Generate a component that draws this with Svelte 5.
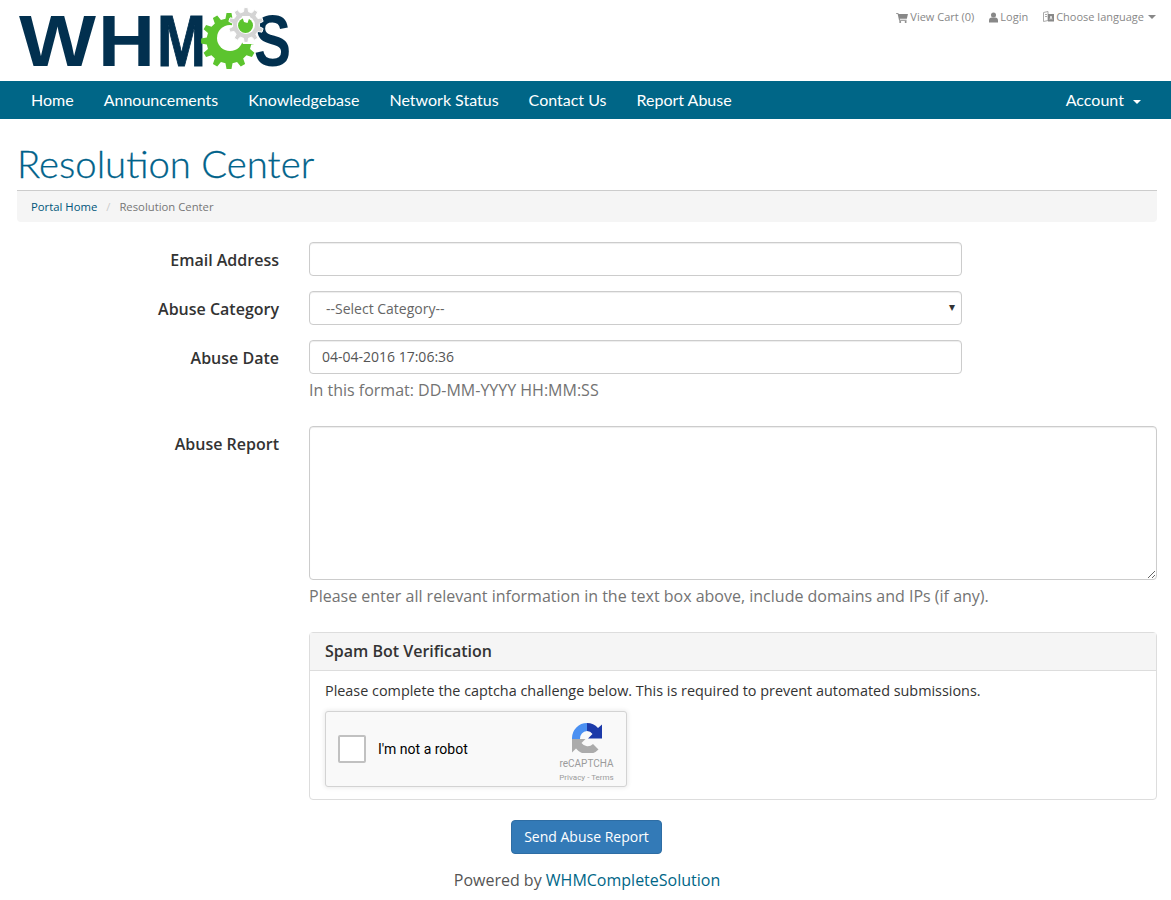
<script>
  const navLinks = ["Home", "Announcements", "Knowledgebase", "Network Status", "Contact Us", "Report Abuse"];

  // builds a closed cog outline, teeth sit between r1 and r2
  const gear = (cx, cy, r1, r2, teeth) => {
    const step = (Math.PI * 2) / teeth;
    let d = "";
    for (let i = 0; i < teeth; i++) {
      const a = i * step - Math.PI / 2;
      const pts = [
        [r1, a - step * 0.3],
        [r2, a - step * 0.17],
        [r2, a + step * 0.17],
        [r1, a + step * 0.3]
      ];
      for (const [r, t] of pts) {
        d += (d ? "L" : "M") + (cx + r * Math.cos(t)).toFixed(2) + " " + (cy + r * Math.sin(t)).toFixed(2);
      }
    }
    return d + "Z";
  };
</script>

<header class="top">
  <svg class="logo" width="320" height="81" viewBox="0 0 320 81">
    <text x="19" y="66" class="logo-text" textLength="77" lengthAdjust="spacingAndGlyphs">W</text>
    <text x="98" y="66" class="logo-text" textLength="57" lengthAdjust="spacingAndGlyphs">H</text>
    <text x="157" y="66" class="logo-text thick" textLength="49" lengthAdjust="spacingAndGlyphs">M</text>
    <path d={gear(229, 41, 22.500, 28, 12)} fill="#5cc42e" />
    <circle cx="230" cy="38" r="13" fill="#fff" />
    <path d="M233 26 L264 10 L264 44 L243 44 Z" fill="#fff" />
    <text x="254" y="66" class="logo-text" textLength="37" lengthAdjust="spacingAndGlyphs">S</text>
    <path d={gear(246, 25, 13.500, 17.500, 10)} fill="#d4d4d4" stroke="#fff" stroke-width="1" />
    <circle cx="246" cy="25" r="9" fill="#fff" />
    <circle cx="245.500" cy="25.500" r="7.500" fill="#5cc42e" />
    <path d="M242 16 L250 16 L247.500 23 L244 22 Z" fill="#fff" />
  </svg>
  <div class="top-links">
    <span class="top-link">
      <svg width="12" height="11" viewBox="0 0 13 12"><path d="M0 1h2.4l.4 1.3H13l-1.2 5H4l.3 1.2h7.2v1H3.4L1.700 2H0Z" fill="#888" /><circle cx="4.500" cy="10.800" r="1.100" fill="#888" /><circle cx="10.500" cy="10.800" r="1.100" fill="#888" /></svg>
      <span>View Cart (0)</span>
    </span>
    <span class="top-link">
      <svg width="9" height="11" viewBox="0 0 10 12"><circle cx="5" cy="3.200" r="2.800" fill="#888" /><path d="M0 11.500V9c0-2 1.500-3 3-3h4c1.500 0 3 1 3 3v2.500Z" fill="#888" /></svg>
      <span>Login</span>
    </span>
    <span class="top-link">
      <svg width="11" height="12" viewBox="0 0 11 12"><path d="M.5 1.500 5 .5v9l-4.500 1Z" fill="none" stroke="#aaa" /><path d="M2 3.500h2M2 5.500h2" stroke="#aaa" /><rect x="5" y="3" width="6" height="7.500" fill="#888" /><path d="M7 8.500 8 5l1 3.500" fill="none" stroke="#fff" stroke-width=".8" /></svg>
      <span>Choose language</span> <i class="caret"></i>
    </span>
  </div>
</header>

<nav class="navbar">
  <ul>
    {#each navLinks as link}
      <li>{link}</li>
    {/each}
  </ul>
  <div class="account">Account <i class="caret white"></i></div>
</nav>

<main>
  <h1>Resolution Center</h1>
  <div class="crumbs">
    <a href="#home">Portal Home</a><span class="sep">/</span><span class="here">Resolution Center</span>
  </div>

  <form>
    <div class="row">
      <label for="email">Email Address</label>
      <div class="field short"><input id="email" type="text" /></div>
    </div>
    <div class="row">
      <label for="cat">Abuse Category</label>
      <div class="field short">
        <div class="select" id="cat">--Select Category--<span class="arrow">▾</span></div>
      </div>
    </div>
    <div class="row date">
      <label for="date">Abuse Date</label>
      <div class="field short">
        <input id="date" type="text" value="04-04-2016 17:06:36" />
        <p class="help">In this format: DD-MM-YYYY HH:MM:SS</p>
      </div>
    </div>
    <div class="row report">
      <label for="report">Abuse Report</label>
      <div class="field">
        <textarea id="report"></textarea>
        <p class="help">Please enter all relevant information in the text box above, include domains and IPs (if any).</p>
      </div>
    </div>

    <div class="panel">
      <div class="panel-head">Spam Bot Verification</div>
      <div class="panel-body">
        <p>Please complete the captcha challenge below. This is required to prevent automated submissions.</p>
        <div class="captcha">
          <span class="check"></span>
          <span class="robot">I'm not a robot</span>
          <div class="brand">
            <svg width="30" height="30" viewBox="0 0 30 30">
              <path d="M15 0 A15 15 0 0 0 0 15 V16 H8 A7.500 7.500 0 0 1 15 8 Z" fill="#4a90f2" />
              <path d="M15 0 A15 15 0 0 1 26 5 L30 1.500 V15.500 H16 L20.500 11 A7.500 7.500 0 0 0 15 8 Z" fill="#1c3aa9" />
              <path d="M0 16 H13.500 L9.500 20 A7.500 7.500 0 0 0 21 21 L26.500 26.500 A15 15 0 0 1 4 25.500 L0 29.500 Z" fill="#ababab" />
            </svg>
            <span class="re">reCAPTCHA</span>
            <span class="terms">Privacy - Terms</span>
          </div>
        </div>
      </div>
    </div>

    <div class="actions"><button type="button">Send Abuse Report</button></div>
  </form>

  <footer>Powered by <a href="#whmcs">WHMCompleteSolution</a></footer>
</main>

<style>
  :global(body) {
    font-family: "Open Sans", sans-serif;
    font-size: 14px;
    color: #333;
    background: #fff;
  }

  .top {
    height: 81px;
    display: flex;
    justify-content: space-between;
  }

  .logo {
    display: block;
  }

  .logo-text {
    font-family: "Liberation Sans", sans-serif;
    font-weight: 700;
    font-size: 72px;
    fill: #02304f;
  }

  .logo-text.thick {
    stroke: #02304f;
    stroke-width: 1px;
  }

  .top-links {
    display: flex;
    gap: 15px;
    padding: 9px 15px 0 0;
    font-size: 11px;
    line-height: 16px;
    color: #888;
  }

  .top-link {
    display: flex;
    align-items: center;
    gap: 2px;
    height: 16px;
  }

  .caret {
    display: inline-block;
    width: 0;
    height: 0;
    margin-left: 2px;
    vertical-align: middle;
    border-top: 4px solid #888;
    border-left: 4px solid transparent;
    border-right: 4px solid transparent;
  }

  .caret.white {
    border-top-color: #fff;
    margin-left: 5px;
  }

  .navbar {
    height: 38px;
    padding-bottom: 1px;
    box-sizing: border-box;
    background: #006687;
    color: #fff;
    display: flex;
    justify-content: space-between;
    align-items: center;
    font-family: Lato, sans-serif;
    font-size: 16px;
  }

  .navbar ul {
    list-style: none;
    display: flex;
    gap: 30px;
    margin: 0;
    padding: 0 0 0 31px;
  }

  .account {
    padding-right: 30px;
  }

  main {
    padding: 0 14px 0 17px;
  }

  h1 {
    margin: 0;
    padding-top: 22px;
    height: 49px;
    border-bottom: 1px solid #ccc;
    box-sizing: content-box;
    font-family: Lato, sans-serif;
    font-weight: 300;
    font-size: 38.300px;
    line-height: 44px;
    color: #00628a;
    -webkit-text-stroke: 0.3px #00628a;
  }

  .crumbs {
    height: 31px;
    line-height: 31px;
    padding-left: 14px;
    background: #f5f5f5;
    border-radius: 0 0 4px 4px;
    font-size: 11.300px;
    color: #777;
  }

  .crumbs a {
    color: #00567a;
    text-decoration: none;
  }

  .sep {
    color: #ccc;
    padding: 0 9px;
  }

  form {
    padding-top: 20px;
  }

  .row {
    display: flex;
    margin-bottom: 15px;
  }

  .row label {
    width: 262px;
    flex: none;
    text-align: right;
    font-size: 16px;
    font-weight: 600;
    line-height: 36px;
    height: 34px;
    color: #333;
  }

  .field {
    margin-left: 30px;
    flex: 1;
  }

  .field.short {
    flex: none;
    width: 653px;
  }

  input,
  textarea,
  .select {
    display: block;
    width: 100%;
    box-sizing: border-box;
    height: 34px;
    padding: 5px 12px 7px;
    border: 1px solid #ccc;
    border-radius: 4px;
    background: #fff;
    font-family: "Open Sans", sans-serif;
    font-size: 14px;
    line-height: 20px;
    color: #555;
    box-shadow: inset 0 1px 1px rgba(0, 0, 0, 0.075);
  }

  .select {
    position: relative;
    padding: 7px 12px 5px 16px;
    color: #666;
  }

  .arrow {
    position: absolute;
    right: 6px;
    top: 5px;
    font-size: 12px;
    color: #333;
  }

  textarea {
    height: 154px;
  }

  .help {
    margin: 5px 0 0;
    font-size: 16px;
    line-height: 22px;
    color: #737373;
  }

  .row.date,
  .row.report {
    margin-bottom: 25px;
  }

  .panel {
    margin-left: 292px;
    height: 168px;
    box-sizing: border-box;
    border: 1px solid #ddd;
    border-radius: 4px;
  }

  .panel-head {
    height: 38px;
    box-sizing: border-box;
    padding: 0 15px;
    background: #f5f5f5;
    border-bottom: 1px solid #ddd;
    font-size: 16px;
    font-weight: 600;
    line-height: 37px;
  }

  .panel-body {
    padding: 10px 15px;
  }

  .panel-body p {
    margin: 0 0 10px;
    font-size: 14.400px;
    line-height: 20px;
  }

  .captcha {
    width: 302px;
    height: 76px;
    box-sizing: border-box;
    padding-bottom: 1px;
    background: #f9f9f9;
    border: 1px solid #d3d3d3;
    border-radius: 3px;
    box-shadow: 0 0 4px 1px rgba(0, 0, 0, 0.08);
    display: flex;
    align-items: center;
    font-family: Roboto, sans-serif;
  }

  .check {
    width: 28px;
    height: 28px;
    margin-left: 12px;
    box-sizing: border-box;
    background: #fff;
    border: 2px solid #c1c1c1;
    border-radius: 2px;
  }

  .robot {
    margin-left: 12px;
    font-size: 14px;
    color: #000;
  }

  .brand {
    margin-left: auto;
    width: 79px;
    align-self: flex-start;
    display: flex;
    flex-direction: column;
    align-items: center;
    color: #9b9b9b;
    padding-top: 11px;
  }

  .re {
    font-size: 10px;
    line-height: 14px;
    margin-top: 4px;
  }

  .terms {
    font-size: 8px;
    line-height: 14px;
  }

  .actions {
    margin-left: 494px;
    padding-top: 20px;
  }

  button {
    width: 151px;
    height: 34px;
    padding-bottom: 3px;
    border: 1px solid #2e6da4;
    border-radius: 4px;
    background: #337ab7;
    color: #fff;
    font-family: "Open Sans", sans-serif;
    font-size: 14px;
  }

  footer {
    padding-top: 15px;
    text-align: center;
    font-size: 16px;
    line-height: 22px;
    color: #555;
  }

  footer a {
    color: #006687;
    text-decoration: none;
  }
</style>
